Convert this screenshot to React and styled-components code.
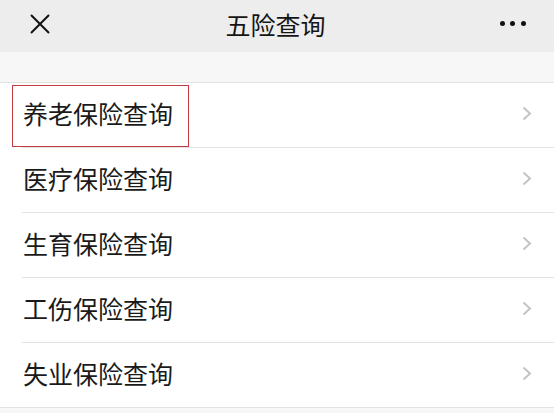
import React from 'react'
import styled, { createGlobalStyle } from 'styled-components';

const items = ['养老保险查询', '医疗保险查询', '生育保险查询', '工伤保险查询', '失业保险查询'];

const App = () => {
	return (
		<Page>
			<Global />
			<Header>
				<IconBtn aria-label="close">
					<svg width="22" height="22" viewBox="0 0 22 22">
						<path d="M2 2 L20 20 M20 2 L2 20" stroke="#111" strokeWidth="2" fill="none" />
					</svg>
				</IconBtn>
				<Title>五险查询</Title>
				<Dots>
					<Dot />
					<Dot />
					<Dot />
				</Dots>
			</Header>
			<Spacer />
			<List>
				{items.map((label, i) => (
					<Row key={label} last={i === items.length - 1}>
						<Label>{label}</Label>
						<Chevron width="10" height="15" viewBox="0 0 10 15">
							<path d="M1.5 1.5 L8 7.5 L1.5 13.5" stroke="#c4c4c4" strokeWidth="2" fill="none" />
						</Chevron>
						{i === 0 && <Highlight />}
					</Row>
				))}
			</List>
		</Page>
	)
};

export default App

const Global = createGlobalStyle`
	body {
		margin: 0;
		background: #f7f7f7;
		font-family: "Noto Sans CJK SC", "Noto Sans", sans-serif;
	}
`
const Page = styled.div`
	width: 554px;
	height: 413px;
	background: #f7f7f7;
	overflow: hidden;
`
const Header = styled.div`
	height: 52px;
	background: #ededed;
	display: flex;
	align-items: center;
	justify-content: space-between;
	padding: 0 28px 0 29px;
	box-sizing: border-box;
`
const IconBtn = styled.div`
	width: 22px;
	height: 22px;
	margin-top: -4px;
	display: flex;
`
const Title = styled.div`
	font-size: 25px;
	color: #151515;
	line-height: 1;
	margin-top: -4px;
`
const Dots = styled.div`
	display: flex;
	gap: 5.5px;
	margin-top: -6px;
`
const Dot = styled.span`
	width: 5px;
	height: 5px;
	border-radius: 50%;
	background: #111;
`
const Spacer = styled.div`
	height: 30px;
	background: #f7f7f7;
`
const List = styled.div`
	background: #fff;
	border-top: 1px solid #e2e2e2;
	border-bottom: 1px solid #e2e2e2;
`
const Row = styled.div`
	position: relative;
	height: 64px;
	display: flex;
	align-items: center;
	justify-content: space-between;
	padding: 0 22px 0 23px;
	&::after {
		content: '';
		display: ${p => (p.last ? 'none' : 'block')};
		position: absolute;
		left: 22px;
		right: 0;
		bottom: -1px;
		height: 1px;
		background: #e2e2e2;
	}
	& + & {
		margin-top: 1px;
	}
`
const Label = styled.span`
	font-size: 25px;
	color: #1a1a1a;
	line-height: 1;
	margin-top: -4px;
`
const Chevron = styled.svg`
	margin-top: -4px;
`
const Highlight = styled.div`
	position: absolute;
	left: 12px;
	top: 2px;
	width: 177px;
	height: 62px;
	border: 1.5px solid #c53a40;
	box-sizing: border-box;
`
